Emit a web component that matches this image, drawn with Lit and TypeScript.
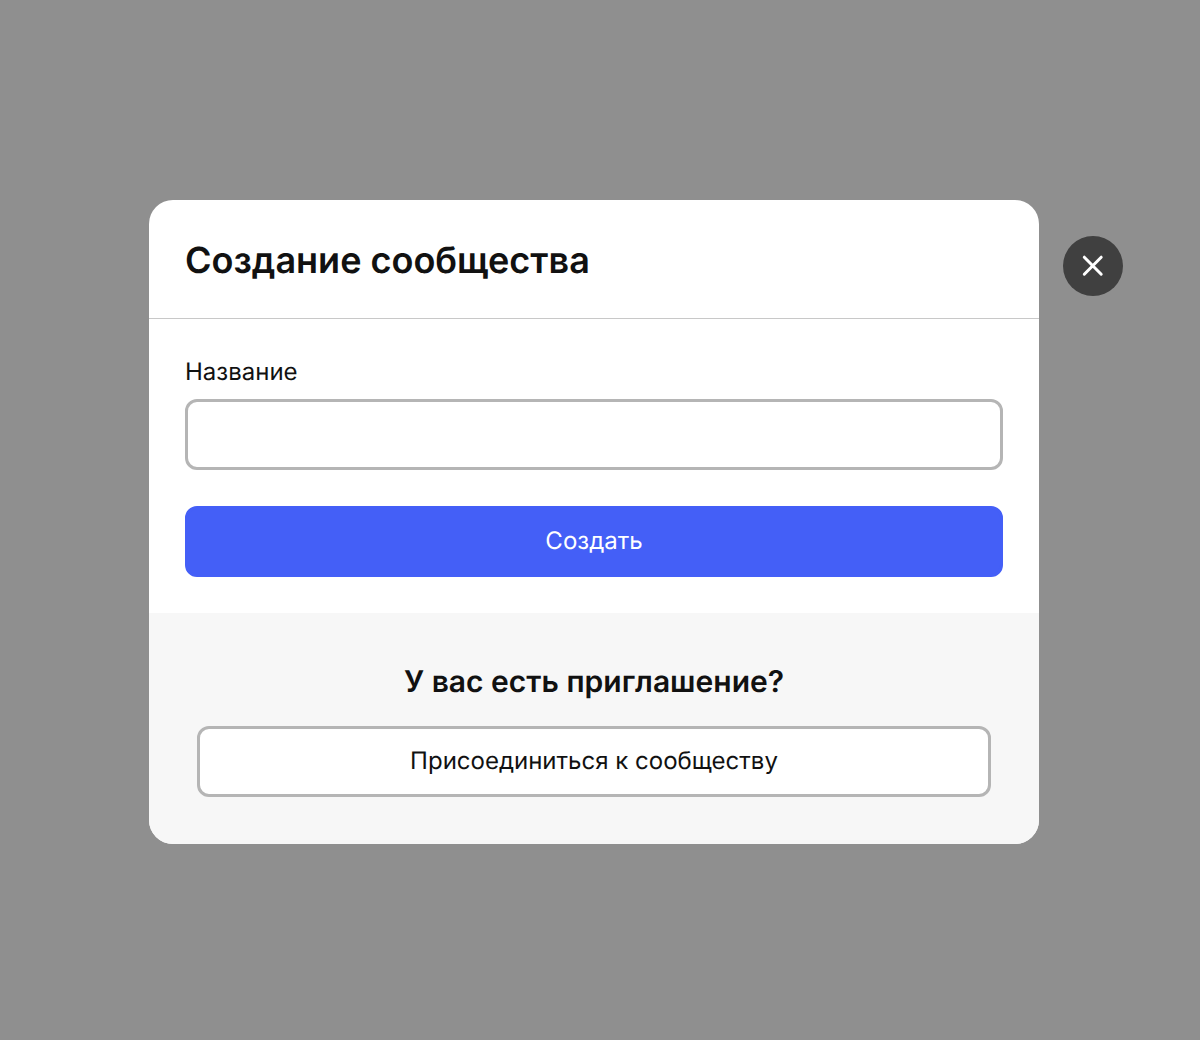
import { LitElement, html, css } from "lit";
import { customElement, state } from "lit/decorators.js";

@customElement("app-root")
export class AppRoot extends LitElement {
  static styles = css`
    :host {
      display: block;
      font-family: Inter, "Liberation Sans", sans-serif;
      color: #111;
      text-rendering: geometricPrecision;
    }
    *,
    *::before,
    *::after {
      box-sizing: border-box;
    }
    .overlay {
      display: flex;
      align-items: flex-start;
      gap: 24px;
      min-height: 100vh;
      padding: 200px 77px 48px 149px;
      background: #8f8f8f;
    }
    .dialog {
      flex: 1;
      min-width: 0;
      overflow: hidden;
      border-radius: 24px;
      background: #fff;
    }
    .header {
      padding: 36px 36px 34px;
      border-bottom: 1px solid #c8c8c8;
    }
    .title {
      margin: 0;
      font-size: 36px;
      line-height: 48px;
      font-weight: 600;
    }
    .form {
      display: flex;
      flex-direction: column;
      padding: 36px;
    }
    .label {
      margin-bottom: 10px;
      font-size: 24px;
      line-height: 34px;
    }
    .field,
    .button {
      width: 100%;
      margin: 0;
      padding: 16px 24px;
      border: 3px solid #b5b5b5;
      border-radius: 12px;
      background: #fff;
      color: inherit;
      font-family: inherit;
      font-size: 24px;
      line-height: 33px;
      text-rendering: inherit;
    }
    .field {
      margin-bottom: 36px;
      outline: none;
    }
    .button {
      padding: 15px 24px 17px;
      cursor: pointer;
    }
    .primary {
      border-color: #445ff7;
      background: #445ff7;
      color: #fff;
    }
    .footer {
      padding: 48px 48px 47px;
      background: #f7f7f7;
      text-align: center;
    }
    .question {
      margin: 0 0 23px;
      font-size: 30px;
      line-height: 42px;
      font-weight: 600;
    }
    .close {
      display: grid;
      place-items: center;
      flex: none;
      width: 60px;
      height: 60px;
      margin: 36px 0 0;
      padding: 0;
      border: 0;
      border-radius: 50%;
      background: #404040;
      color: #fff;
      cursor: pointer;
    }
    .cross {
      display: block;
      width: 24px;
      height: 24px;
    }
  `;

  @state() private name = "";

  private onInput(event: Event) {
    this.name = (event.target as HTMLInputElement).value;
  }

  private onSubmit(event: Event) {
    event.preventDefault();
  }

  render() {
    return html`
      <div class="overlay">
        <section class="dialog" role="dialog" aria-labelledby="title">
          <header class="header">
            <h1 class="title" id="title">Создание сообщества</h1>
          </header>
          <form class="form" @submit=${this.onSubmit}>
            <label class="label" for="name">Название</label>
            <input class="field" id="name" type="text" .value=${this.name} @input=${this.onInput} />
            <button class="button primary" type="submit">Создать</button>
          </form>
          <footer class="footer">
            <h2 class="question">У вас есть приглашение?</h2>
            <button class="button" type="button">Присоединиться к сообществу</button>
          </footer>
        </section>
        <button class="close" type="button" aria-label="Закрыть">
          <svg class="cross" viewBox="0 0 24 24" fill="none" stroke="currentColor" stroke-width="3" stroke-linecap="round" aria-hidden="true">
            <path d="M3.3 3.2 20.2 20.2M20.2 3.2 3.3 20.2" />
          </svg>
        </button>
      </div>
    `;
  }
}
